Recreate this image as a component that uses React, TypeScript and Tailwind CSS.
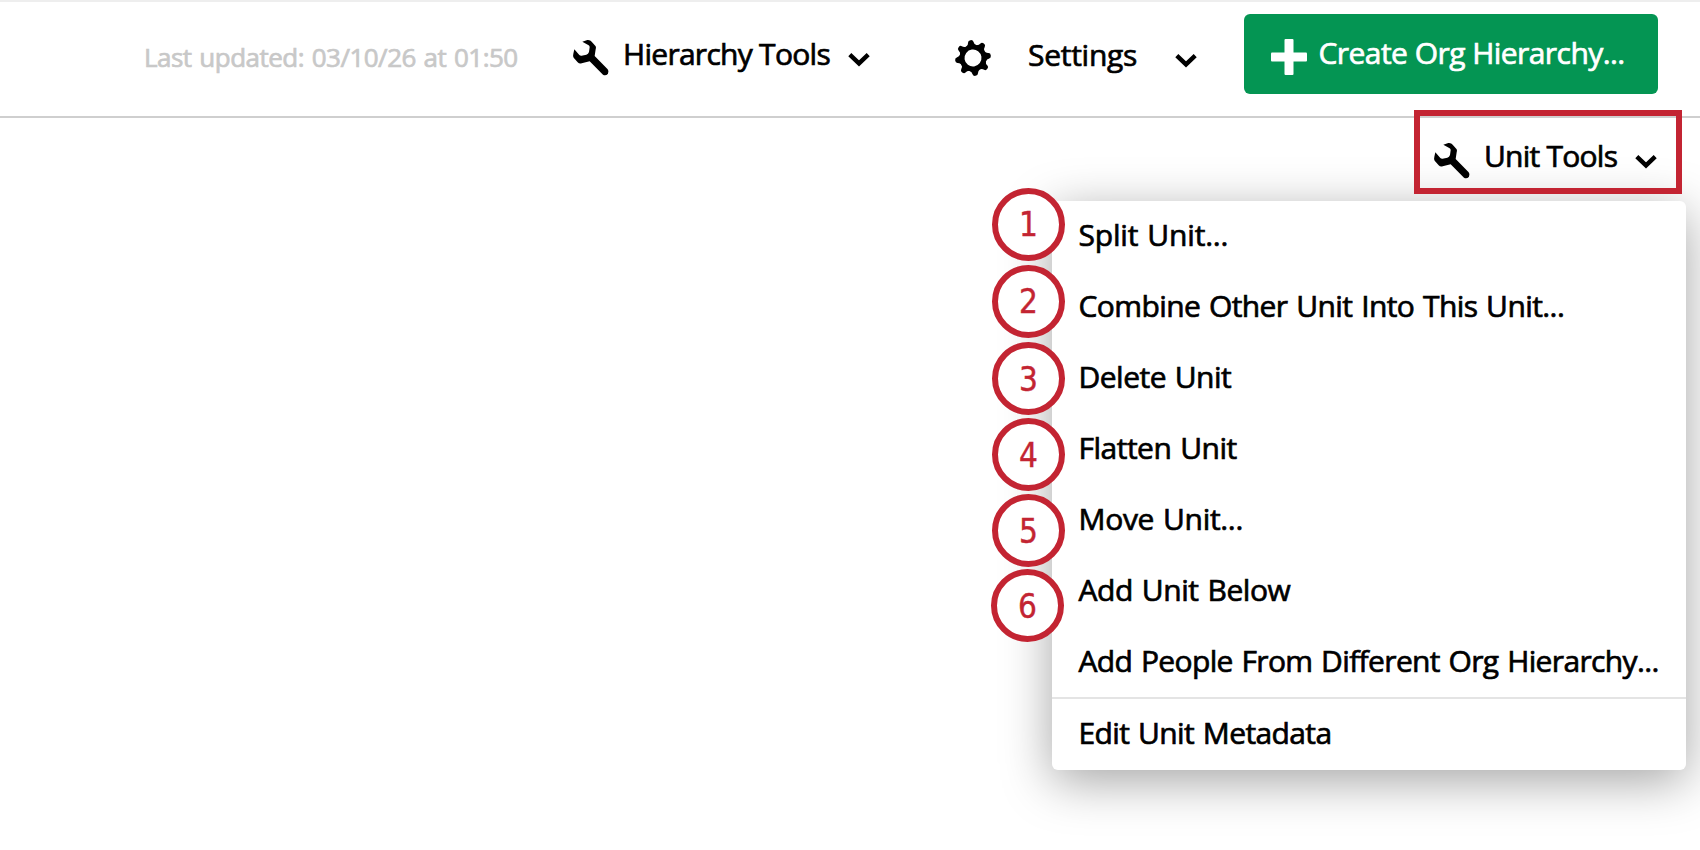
import type { ReactNode } from "react";

function Wrench() {
  return (
    <svg viewBox="66 58 114 114" className="h-[38px] w-[38px] shrink-0" fill="currentColor">
      <path d="M97 66 L112 61 Q121 60 125 66 L137 80 Q139 84 137 89 L134 109 L173 149 Q178 155 174 162 Q167 170 159 165 L119 125 L95 131 Q88 133 83 128 L71 114 Q68 109 70 102 L73 89 L88 106 Q91 109 95 108 L109 105 Q115 103 117 97 L119 83 Q119 79 116 77 Z" />
    </svg>
  );
}

const teeth = [0, 45, 90, 135, 180, 225, 270, 315];

function Gear() {
  return (
    <svg viewBox="-19 -19 38 38" className="h-[38px] w-[38px] shrink-0" fill="currentColor">
      <g transform="rotate(-8)">
        <circle r="11" fill="none" stroke="currentColor" strokeWidth="5" />
        {teeth.map((angle) => (
          <path
            key={angle}
            transform={`rotate(${angle})`}
            d="M-5.4 -12 Q-2.8 -13.5 -2.7 -16 Q-2.5 -18 0 -18 Q2.5 -18 2.7 -16 Q2.8 -13.5 5.4 -12 Z"
          />
        ))}
      </g>
    </svg>
  );
}

function Chevron() {
  return (
    <svg viewBox="0 0 22 16" className="h-4 w-[22px] shrink-0" fill="none" stroke="currentColor" strokeWidth="4.4">
      <path d="M1.8 2.6 L11 11.4 L20.2 2.6" />
    </svg>
  );
}

function Plus() {
  return (
    <svg viewBox="0 0 36 36" className="h-9 w-9 shrink-0" fill="currentColor">
      <rect x="13.5" width="9" height="36" rx="1" />
      <rect y="13.5" width="36" height="9" rx="1" />
    </svg>
  );
}

function Label({ className, children }: { className: string; children: ReactNode }) {
  return <span className={`block text-[30px] leading-[42px] whitespace-nowrap ${className}`}>{children}</span>;
}

const menuItems = [
  { label: "Split Unit...", tracking: "tracking-[-0.18px]" },
  { label: "Combine Other Unit Into This Unit...", tracking: "tracking-[-0.59px]" },
  { label: "Delete Unit", tracking: "tracking-[-0.52px]" },
  { label: "Flatten Unit", tracking: "tracking-[-0.5px]" },
  { label: "Move Unit...", tracking: "tracking-[-0.32px]" },
  { label: "Add Unit Below", tracking: "tracking-[-0.43px]" },
  { label: "Add People From Different Org Hierarchy...", tracking: "tracking-[-0.64px]" },
];

const badges = [
  "left-[992px] top-[187.5px]",
  "left-[992px] top-[264.8px]",
  "left-[992px] top-[342px]",
  "left-[992px] top-[418px]",
  "left-[992px] top-[494px]",
  "left-[991px] top-[569px]",
];

export default function App() {
  return (
    <div className="relative h-[850px] w-[1700px] overflow-hidden bg-white font-['Open_Sans',sans-serif] text-black [word-spacing:1.5px] [-webkit-text-stroke:0.7px_currentColor]">
      <header className="flex h-[118px] items-start border-t-2 border-b-2 border-t-[#eeeeee] border-b-[#cfcfcf] pl-[144px]">
        <span className="mt-[36px] w-[428px] text-[26px] leading-[38px] tracking-[-0.52px] whitespace-nowrap text-[#c8c8c8]">
          Last updated: 03/10/26 at 01:50
        </span>
        <button className="flex w-[382px] items-start">
          <span className="mt-[37px]"><Wrench /></span>
          <Label className="mt-[31px] ml-[13px] w-[225px] text-left tracking-[-0.72px]">Hierarchy Tools</Label>
          <span className="mt-[50px]"><Chevron /></span>
        </button>
        <button className="flex w-[290px] items-start">
          <span className="mt-[37px]"><Gear /></span>
          <Label className="mt-[32px] ml-[36px] w-[147px] text-left tracking-[-0.27px]">Settings</Label>
          <span className="mt-[51px]"><Chevron /></span>
        </button>
        <button className="mt-3 flex h-20 w-[414px] items-start rounded-md bg-[#049553] pl-[27px] text-white">
          <span className="mt-[25px]"><Plus /></span>
          <Label className="mt-[18px] ml-[11.5px] tracking-[-0.55px]">Create Org Hierarchy...</Label>
        </button>
      </header>

      <div className="absolute top-[201px] left-[1052px] w-[634px] rounded-md bg-white shadow-[0_11px_50px_rgba(0,0,0,0.36)]">
        <ul>
          {menuItems.map((item) => (
            <li key={item.label} className="h-[71px] pl-[26.5px]">
              <span className={`block text-[30px] leading-[67px] whitespace-nowrap ${item.tracking}`}>{item.label}</span>
            </li>
          ))}
        </ul>
        <div className="-mt-px h-[73px] border-t-2 border-[#e4e4e4] pl-[26.5px]">
          <span className="block text-[30px] leading-[68px] tracking-[-0.61px] whitespace-nowrap">Edit Unit Metadata</span>
        </div>
      </div>

      <button className="absolute top-[110px] left-[1414px] flex h-[84px] w-[268px] items-start border-[6px] border-[#c32432] pl-[13px]">
        <span className="mt-[26px]"><Wrench /></span>
        <Label className="mt-[19px] ml-[13px] w-[151px] text-left tracking-[-0.76px]">Unit Tools</Label>
        <span className="mt-[38px]"><Chevron /></span>
      </button>

      {badges.map((position, index) => (
        <span
          key={position}
          className={`absolute flex h-[73px] w-[73px] items-center justify-center rounded-full border-[6px] border-[#c32432] bg-white pt-px font-['DejaVu_Sans_Condensed','DejaVu_Sans',sans-serif] text-[33px] leading-none text-[#c32432] [-webkit-text-stroke:0.4px_currentColor] ${position}`}
        >
          {index + 1}
        </span>
      ))}
    </div>
  );
}
